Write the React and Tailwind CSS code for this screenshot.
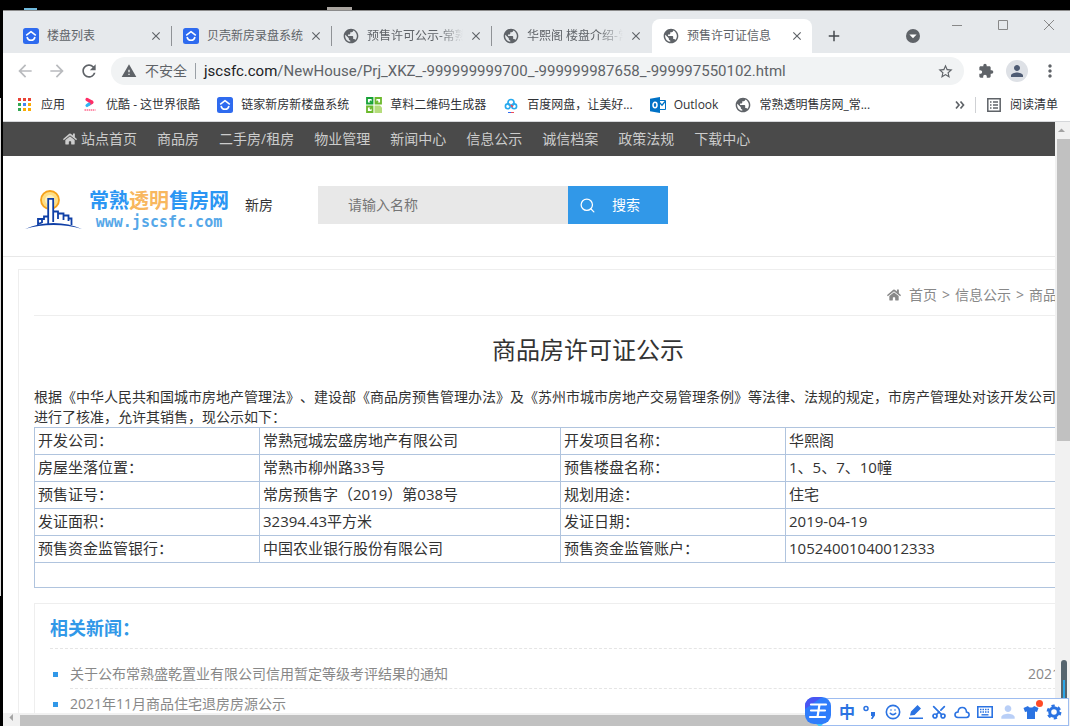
import { FaHome } from 'react-icons/fa'
import {
  MdPublic, MdWarning, MdStarBorder, MdExtension, MdPerson, MdMoreVert, MdArrowBack,
  MdArrowForward, MdRefresh, MdAdd, MdClose, MdArrowDropDown, MdArrowDropUp, MdArrowLeft,
} from 'react-icons/md'
import { Search, Smile, Scissors } from 'lucide-react'

const TABS = [
  { title: '楼盘列表', icon: 'beike' },
  { title: '贝壳新房录盘系统', icon: 'beike' },
  { title: '预售许可公示-常熟', icon: 'globe', fade: true },
  { title: '华熙阁 楼盘介绍-常', icon: 'globe', fade: true },
  { title: '预售许可证信息', icon: 'globe', active: true },
]

const BOOKMARKS = [
  { title: '应用', icon: 'apps' },
  { title: '优酷 - 这世界很酷', icon: 'youku' },
  { title: '链家新房新楼盘系统', icon: 'beike' },
  { title: '草料二维码生成器', icon: 'qr' },
  { title: '百度网盘，让美好...', icon: 'pan' },
  { title: 'Outlook', icon: 'outlook' },
  { title: '常熟透明售房网_常...', icon: 'globe' },
]

const NAV = ['商品房', '二手房/租房', '物业管理', '新闻中心', '信息公示', '诚信档案', '政策法规', '下载中心']

const ROWS = [
  ['开发公司：', '常熟冠城宏盛房地产有限公司', '开发项目名称：', '华熙阁'],
  ['房屋坐落位置：', '常熟市柳州路33号', '预售楼盘名称：', '1、5、7、10幢'],
  ['预售证号：', '常房预售字（2019）第038号', '规划用途：', '住宅'],
  ['发证面积：', '32394.43平方米', '发证日期：', '2019-04-19'],
  ['预售资金监管银行：', '中国农业银行股份有限公司', '预售资金监管账户：', '10524001040012333'],
]

const NEWS = [
  { title: '关于公布常熟盛乾置业有限公司信用暂定等级考评结果的通知', date: '2021' },
  { title: '2021年11月商品住宅退房房源公示', date: '2021' },
]

function BeikeIcon() {
  return (
    <svg viewBox="0 0 16 16" className="size-4">
      <rect width="16" height="16" rx="2.5" fill="#2f6bef" />
      <path d="M3.2 7.3 8 3.6l4.8 3.7M4 9c.5 2 2.1 3.3 4 3.3S11.5 11 12 9" fill="none" stroke="#fff" strokeWidth="1.5" strokeLinejoin="round" />
    </svg>
  )
}

function AppsIcon() {
  const colors = ['#ea4335', '#ea4335', '#ea4335', '#34a853', '#4285f4', '#fbab05', '#34a853', '#fbab05', '#fbab05']
  return (
    <svg viewBox="0 0 16 16" className="size-4">
      {colors.map((c, i) => (
        <rect key={i} x={1 + (i % 3) * 5} y={1 + Math.floor(i / 3) * 5} width="3" height="3" fill={c} />
      ))}
    </svg>
  )
}

function YoukuIcon() {
  return (
    <svg viewBox="0 0 16 16" className="size-4">
      <path d="M5 2.500 9.500 5" stroke="#ff2d66" strokeWidth="3.200" strokeLinecap="round" />
      <path d="m10 5.300-2.500 1.500" stroke="#ff2d66" strokeWidth="3.200" strokeLinecap="round" />
      <path d="M7 7.200 5 8.500" stroke="#2fb5f5" strokeWidth="3.200" strokeLinecap="round" />
      <path d="M2.500 13h11" stroke="#ff8fab" strokeWidth="2" strokeDasharray="1.500 .6" />
    </svg>
  )
}

function QrIcon() {
  return (
    <svg viewBox="0 0 16 16" className="size-4" fill="none" strokeWidth="1.8">
      <path d="M1 1h5.500v5.500H1z" stroke="#17a237" />
      <path d="M9.500 1H15v5.500H9.500z" stroke="#6cb92d" />
      <path d="M1 9.500h5.500V15H1z" stroke="#6cb92d" />
      <path d="m6 6-2-2" stroke="#17a237" />
      <path d="m10 6 2-2M6 10l-2 2" stroke="#6cb92d" />
      <path d="M8.500 8.500H14l2 2V16H8.500z" fill="#b5dc7c" />
    </svg>
  )
}

function PanIcon() {
  return (
    <svg viewBox="0 0 16 16" className="size-4">
      <circle cx="8" cy="5.500" r="3" fill="none" stroke="#27a9ee" strokeWidth="1.700" />
      <circle cx="4.800" cy="9.300" r="2.400" fill="none" stroke="#27a9ee" strokeWidth="1.600" />
      <circle cx="11.200" cy="9.300" r="2.400" fill="none" stroke="#27a9ee" strokeWidth="1.600" />
      <path d="m8 8 1.700 1.900" stroke="#f04a5a" strokeWidth="1.700" />
      <path d="M5 15.500h6" stroke="#2f6bef" />
      <path d="M8 15.500h3" stroke="#f04a5a" />
    </svg>
  )
}

function OutlookIcon() {
  return (
    <svg viewBox="0 0 16 16" className="size-4">
      <path d="M9 3.500h6.500v9H9" fill="#fff" stroke="#0072c6" />
      <path d="m9 5 3 3.200L15.500 4" fill="none" stroke="#0072c6" strokeWidth="1.300" />
      <path d="M0 1.800 10 0v16L0 14.200z" fill="#0072c6" />
      <ellipse cx="5" cy="8" rx="2" ry="2.700" fill="none" stroke="#fff" strokeWidth="1.500" />
    </svg>
  )
}

function SiteIcon({ name }) {
  if (name === 'beike') return <BeikeIcon />
  if (name === 'apps') return <AppsIcon />
  if (name === 'youku') return <YoukuIcon />
  if (name === 'qr') return <QrIcon />
  if (name === 'pan') return <PanIcon />
  if (name === 'outlook') return <OutlookIcon />
  return <MdPublic className="size-4 scale-110 text-[#5f6368]" />
}

function TabStrip() {
  return (
    <div className="flex h-[43px] shrink-0 items-end bg-[#e6e9ec] pl-[9px] border-t border-[#8b8b8b]">
      {TABS.map((t, i) => (
        <div key={t.title}
          className={`flex h-[34px] w-40 shrink-0 items-center pl-[11px] pr-2 ${t.active ? 'rounded-t-lg bg-white' : ''}`}>
          <SiteIcon name={t.icon} />
          <span className={`ml-2 w-24 overflow-hidden whitespace-nowrap text-xs leading-[18px] text-[#5f6368] ${t.fade ? '[mask-image:linear-gradient(to_right,black_75%,transparent)]' : ''}`}>
            {t.title}
          </span>
          <button aria-label="关闭" className="ml-auto text-[#5f6368]"><MdClose className="size-[14px]" /></button>
          {i < 3 && <span className="-mr-2 ml-2 h-5 w-px bg-[#8f9296]" />}
          {i === 3 && <span className="-mr-2 ml-2 w-px" />}
        </div>
      ))}
      <button aria-label="新标签页" className="mb-2 ml-[13px] text-[#45494d]"><MdAdd className="size-[18px]" /></button>
      <div className="ml-auto flex h-full text-[#5f6368]">
        <button aria-label="搜索标签页" className="mr-[31px] mt-[18px] size-[14px] rounded-full bg-[#5f6368]">
          <MdArrowDropDown className="size-[14px] scale-125 text-white" />
        </button>
        <div className="flex h-7 items-center gap-[34px] pr-[15px]">
          <button aria-label="最小化"><svg viewBox="0 0 12 12" className="size-3"><path d="M1 6.500h10" stroke="#888" /></svg></button>
          <button aria-label="最大化"><svg viewBox="0 0 12 12" className="size-3"><path d="M1.500 1.500h9v9h-9z" fill="none" stroke="#888" /></svg></button>
          <button aria-label="关闭窗口"><svg viewBox="0 0 12 12" className="size-3"><path d="m1 1 10 10M11 1 1 11" stroke="#888" /></svg></button>
        </div>
      </div>
    </div>
  )
}

function Toolbar() {
  return (
    <div className="flex h-9 shrink-0 items-center bg-white pl-3 pr-[10px] text-[#5f6368]">
      <button aria-label="后退" className="text-[#b9bbbe]"><MdArrowBack className="size-5" /></button>
      <button aria-label="前进" className="ml-3 text-[#b9bbbe]"><MdArrowForward className="size-5" /></button>
      <button aria-label="刷新" className="ml-3"><MdRefresh className="size-5" /></button>
      <div className="ml-3 flex h-7 flex-1 items-center rounded-full bg-[#f1f3f4] px-[10px]">
        <MdWarning className="size-4" />
        <span className="ml-2 text-sm">不安全</span>
        <span className="mx-2 h-4 w-px bg-[#9aa0a6]" />
        <span className="font-[Roboto,sans-serif] text-[15px] leading-5 whitespace-nowrap">
          <span className="text-[#202124]">jscsfc.com</span>/NewHouse/Prj_XKZ_-999999999700_-999999987658_-999997550102.html
        </span>
        <button aria-label="收藏" className="ml-auto"><MdStarBorder className="size-[17px]" /></button>
      </div>
      <button aria-label="扩展程序" className="ml-[14px]"><MdExtension className="size-4" /></button>
      <button aria-label="用户" className="ml-3 flex size-[22px] items-center justify-center rounded-full bg-[#dee1e6] text-[#4e5b73]">
        <MdPerson className="size-[18px]" />
      </button>
      <button aria-label="更多" className="ml-3"><MdMoreVert className="size-5" /></button>
    </div>
  )
}

function BookmarksBar() {
  return (
    <div className="flex h-[33px] shrink-0 items-center border-b border-[#d5d7da] bg-white pb-px pl-[14px] pr-3 text-xs text-[#303236]">
      <div className="flex gap-[17px]">
        {BOOKMARKS.map(b => (
          <a key={b.title} href="#" className="flex items-center gap-2 whitespace-nowrap">
            <SiteIcon name={b.icon} />{b.title}
          </a>
        ))}
      </div>
      <button aria-label="更多书签" className="ml-auto">
        <svg viewBox="0 0 10 10" className="size-[10px]"><path d="m1 1.500 3 3.500-3 3.500M5.500 1.500l3 3.500-3 3.500" fill="none" stroke="#5f6368" strokeWidth="1.700" /></svg>
      </button>
      <span className="mx-[10px] h-4 w-px bg-[#cfd1d4]" />
      <button className="flex items-center gap-2 whitespace-nowrap">
        <svg viewBox="0 0 16 16" className="size-4" fill="none" stroke="#5f6368" strokeWidth="1.500">
          <path d="M1.800 1.800h12.400v12.400H1.800z" />
          <path d="M4 5h1.500M7 5h5M4 8h1.500M7 8h5M4 11h1.500M7 11h5" />
        </svg>
        阅读清单
      </button>
    </div>
  )
}

function Logo() {
  return (
    <a href="#" className="flex items-center pt-[10px]">
      <svg viewBox="0 0 58 42" className="h-[42px] w-[58px]" fill="none">
        <circle cx="25" cy="11" r="9" fill="#ffdf85" stroke="#f6a21c" strokeWidth="1.800" />
        <circle cx="25" cy="11" r="5" fill="#fff0bd" />
        <path d="M22.500 36V9.500h6V22.500l5 1.500 6 1.500 5 3 3 3v6z" fill="#fff" />
        <path d="M13 36v-6h6v-2.500h3.500M13 35l4-1.500V31M23.200 35V9.800h5V33M28.500 22.500h4.500V30M33 24.500h5.500V31M39 26.500h4.500V32M43.500 29.500h3V36" stroke="#0f3fa6" strokeWidth="1.800" />
        <path d="M0 40c17-8 40-8 57 0-17-5.500-40-5.500-57 0z" fill="#0f3fa6" />
      </svg>
      <span className="ml-[6px] flex flex-col items-center">
        <span className="text-[20px] leading-6 font-bold text-[#2b96f3]">常熟<span className="text-[#f8b75f]">透明</span>售房网</span>
        <span className="font-['DejaVu_Sans_Mono'] text-[15px] leading-[18px] font-bold text-[#55a7e8]">www.jscsfc.com</span>
      </span>
    </a>
  )
}

function SitePage() {
  return (
    <main className="min-w-[1170px] bg-white text-sm text-[#333] [text-spacing-trim:space-all]">
      <nav className="flex h-[34px] items-center gap-5 bg-[#4a4a4a] pl-[60px] text-[#ccc]">
        <a href="#" className="flex items-center gap-1"><FaHome className="size-[14px]" />站点首页</a>
        {NAV.map(n => <a key={n} href="#">{n}</a>)}
      </nav>
      <header className="flex h-[101px] items-center border-b border-[#e8e8e8] pb-[2px] pl-[22px]">
        <Logo />
        <a href="#" className="ml-4">新房</a>
        <form className="ml-[45px] flex h-[38px]" onSubmit={e => e.preventDefault()}>
          <input aria-label="请输入名称" placeholder="请输入名称"
            className="w-[250px] bg-[#e8e8e8] pl-[30px] outline-none placeholder:text-[#757575]" />
          <button className="flex w-[100px] items-center gap-4 bg-[#3198e8] pl-[11px] text-white">
            <Search className="size-[17px]" strokeWidth={1.8} />搜索
          </button>
        </form>
      </header>

      <section className="mt-3 ml-[15px] w-[1140px] border border-[#eee] px-[15px]">
        <div className="flex h-[46px] items-center border-b border-[#eee] pt-[5px] text-[#888]">
          <nav className="ml-[853px] flex items-center whitespace-nowrap">
            <FaHome className="mr-2 size-[14px]" />
            <a href="#">首页</a>
            <span className="mx-[5px]">&gt;</span>
            <a href="#">信息公示</a>
            <span className="mx-[5px]">&gt;</span>
            <span>商品</span>
          </nav>
        </div>
        <h1 className="py-4 text-center text-2xl leading-9">商品房许可证公示</h1>
        <p className="mt-[3px] leading-5 whitespace-nowrap">
          根据《中华人民共和国城市房地产管理法》、建设部《商品房预售管理办法》及《苏州市城市房地产交易管理条例》等法律、法规的规定，市房产管理处对该开发公司<br />
          进行了核准，允许其销售，现公示如下：
        </p>
        <table className="w-full table-fixed border-collapse text-[15px]">
          <colgroup>
            <col className="w-[225px]" /><col className="w-[301px]" /><col className="w-[225px]" /><col />
          </colgroup>
          <tbody>
            {ROWS.map(r => (
              <tr key={r[0]} className="h-[27px]">
                {r.map((c, i) => <td key={i} className="border border-[#b0c4de] px-[3px] pt-0 pb-[2px] leading-5">{c}</td>)}
              </tr>
            ))}
            <tr className="h-[25px]"><td colSpan={4} className="border border-[#b0c4de]" /></tr>
          </tbody>
        </table>

        <section className="mt-[15px] border border-[#eee] px-[15px]">
          <h2 className="border-b border-dashed border-[#e5e5e5] pt-[10px] pb-[6px] text-lg leading-7 font-bold text-[#3198e8]">相关新闻：</h2>
          <ul className="pt-[10px] text-[#888]">
            {NEWS.map(n => (
              <li key={n.title} className="flex items-center pl-[3px]">
                <span className="mr-3 size-[5px] bg-[#3198e8]" />
                <div className="flex flex-1 justify-between border-b border-dashed border-[#e5e5e5] leading-[29px]">
                  <a href="#">{n.title}</a>
                  <time className="w-[98px]">{n.date}</time>
                </div>
              </li>
            ))}
          </ul>
        </section>
      </section>
    </main>
  )
}

function ImeBar() {
  return (
    <div className="absolute right-px bottom-0 flex h-7 items-center gap-[7px] border border-[#9dbcf0] bg-white pr-[6px] pl-[19px] text-[#2b73e2]">
      <svg viewBox="0 0 28 30" className="absolute -top-[2px] -left-[16px] h-[30px] w-7">
        <path d="M7 23h16l-7 7z" fill="#3cc3fa" />
        <rect x="1" width="26" height="27" rx="9" fill="#2f7dfb" />
        <path d="M1 12V9a9 9 0 0 1 9-9h8z" fill="#4a55f2" />
        <path d="M7 7.500h15M7 13.500h14M6 20h15M15.500 7.500 13.500 20" stroke="#fff" strokeWidth="2.200" strokeLinecap="round" />
      </svg>
      <button className="text-[16px] leading-none font-bold">中</button>
      <button aria-label="标点">
        <svg viewBox="0 0 16 16" className="size-4"><circle cx="4" cy="4.500" r="2" fill="none" stroke="#2b73e2" strokeWidth="1.500" /><path d="M9 8h4v3.500L10.500 15H9l1.200-3H9z" fill="#2b73e2" /></svg>
      </button>
      <button aria-label="表情"><Smile className="size-4" strokeWidth={2.4} /></button>
      <button aria-label="手写">
        <svg viewBox="0 0 16 16" className="size-4"><path d="m2 11.500 1-4L9.500 1 13 4.500 6.500 11zM1 13.500h14V15H1z" fill="#2b73e2" /></svg>
      </button>
      <button aria-label="截图"><Scissors className="size-4 -rotate-90" strokeWidth={2.6} /></button>
      <button aria-label="云">
        <svg viewBox="0 0 16 16" className="size-4"><path d="M4 13.500h8.500c3.500-.5 3.500-5 0-5.500C12 2 4.500 2 4 8c-4 .3-4 5 0 5.500z" fill="none" stroke="#2b73e2" strokeWidth="1.600" /></svg>
      </button>
      <button aria-label="键盘">
        <svg viewBox="0 0 16 16" className="size-4" fill="none" stroke="#2b73e2"><path d="M.8 2.800h14.400v10.400H.8z" strokeWidth="1.600" /><path d="M3 5.500h10M3 8h10" strokeWidth="1.400" strokeDasharray="1.500 1" /><path d="M4.500 10.800h7" strokeWidth="1.400" /></svg>
      </button>
      <button aria-label="账号" className="text-[#b9cff7]"><MdPerson className="size-4 scale-125" /></button>
      <button aria-label="皮肤" className="relative">
        <svg viewBox="0 0 16 16" className="size-4"><path d="M5 2c1 2 5 2 6 0l4.500 2-1.500 4-2-.5V15H4V7.500L2 8 .5 4z" fill="#2b73e2" /></svg>
        <span className="absolute -top-1 -right-1 size-[7px] rounded-full bg-[#ff4a26]" />
      </button>
      <button aria-label="设置">
        <svg viewBox="0 0 16 16" className="size-4" fill="none" stroke="#2b73e2"><circle cx="8" cy="8" r="4.300" strokeWidth="3" /><circle cx="8" cy="8" r="6.300" strokeWidth="2.200" strokeDasharray="3.300 3.300" /></svg>
      </button>
    </div>
  )
}

export default function App() {
  return (
    <div className="relative flex h-screen flex-col overflow-hidden bg-black font-['Open_Sans','Noto_Sans_CJK_SC',sans-serif]">
      <div className="flex h-[10px] shrink-0 items-end pl-6">
        <span className="h-[2px] w-[13px] bg-[#6fb9dc]" />
        <span className="ml-[290px] h-[3px] w-[25px] bg-[#aaa5a0]" />
      </div>
      <div className="flex min-h-0 flex-1">
        <div className="w-[3px] shrink-0 pt-[88px]"><div className="h-[498px] w-px bg-[#ddd]" /></div>
        <div className="flex min-w-0 flex-1 flex-col">
          <TabStrip />
          <Toolbar />
          <BookmarksBar />
          <div className="flex min-h-0 flex-1">
            <div className="flex min-w-0 flex-1 flex-col">
              <div className="min-h-0 flex-1 overflow-hidden bg-white"><SitePage /></div>
              <div className="flex h-[13px] shrink-0 items-end bg-[#f1f1f1]">
                <MdArrowLeft className="size-[17px] shrink-0 text-[#a3a3a3]" />
                <span className="h-[11px] w-4/5 bg-[#c1c1c1]" />
              </div>
            </div>
            <div className="flex w-[15px] shrink-0 flex-col items-end bg-[#f1f1f1]">
              <MdArrowDropUp className="size-[17px] shrink-0 text-[#a3a3a3]" />
              <span className="h-1/2 w-[13px] bg-[#c1c1c1]" />
            </div>
          </div>
        </div>
      </div>
      <div className="absolute right-[3px] bottom-7 flex h-[38px] w-[6px] items-end justify-center rounded-t bg-[#56656f]">
        <span className="h-[18px] w-[2px] bg-[#2ba6e8]" />
      </div>
      <ImeBar />
    </div>
  )
}
